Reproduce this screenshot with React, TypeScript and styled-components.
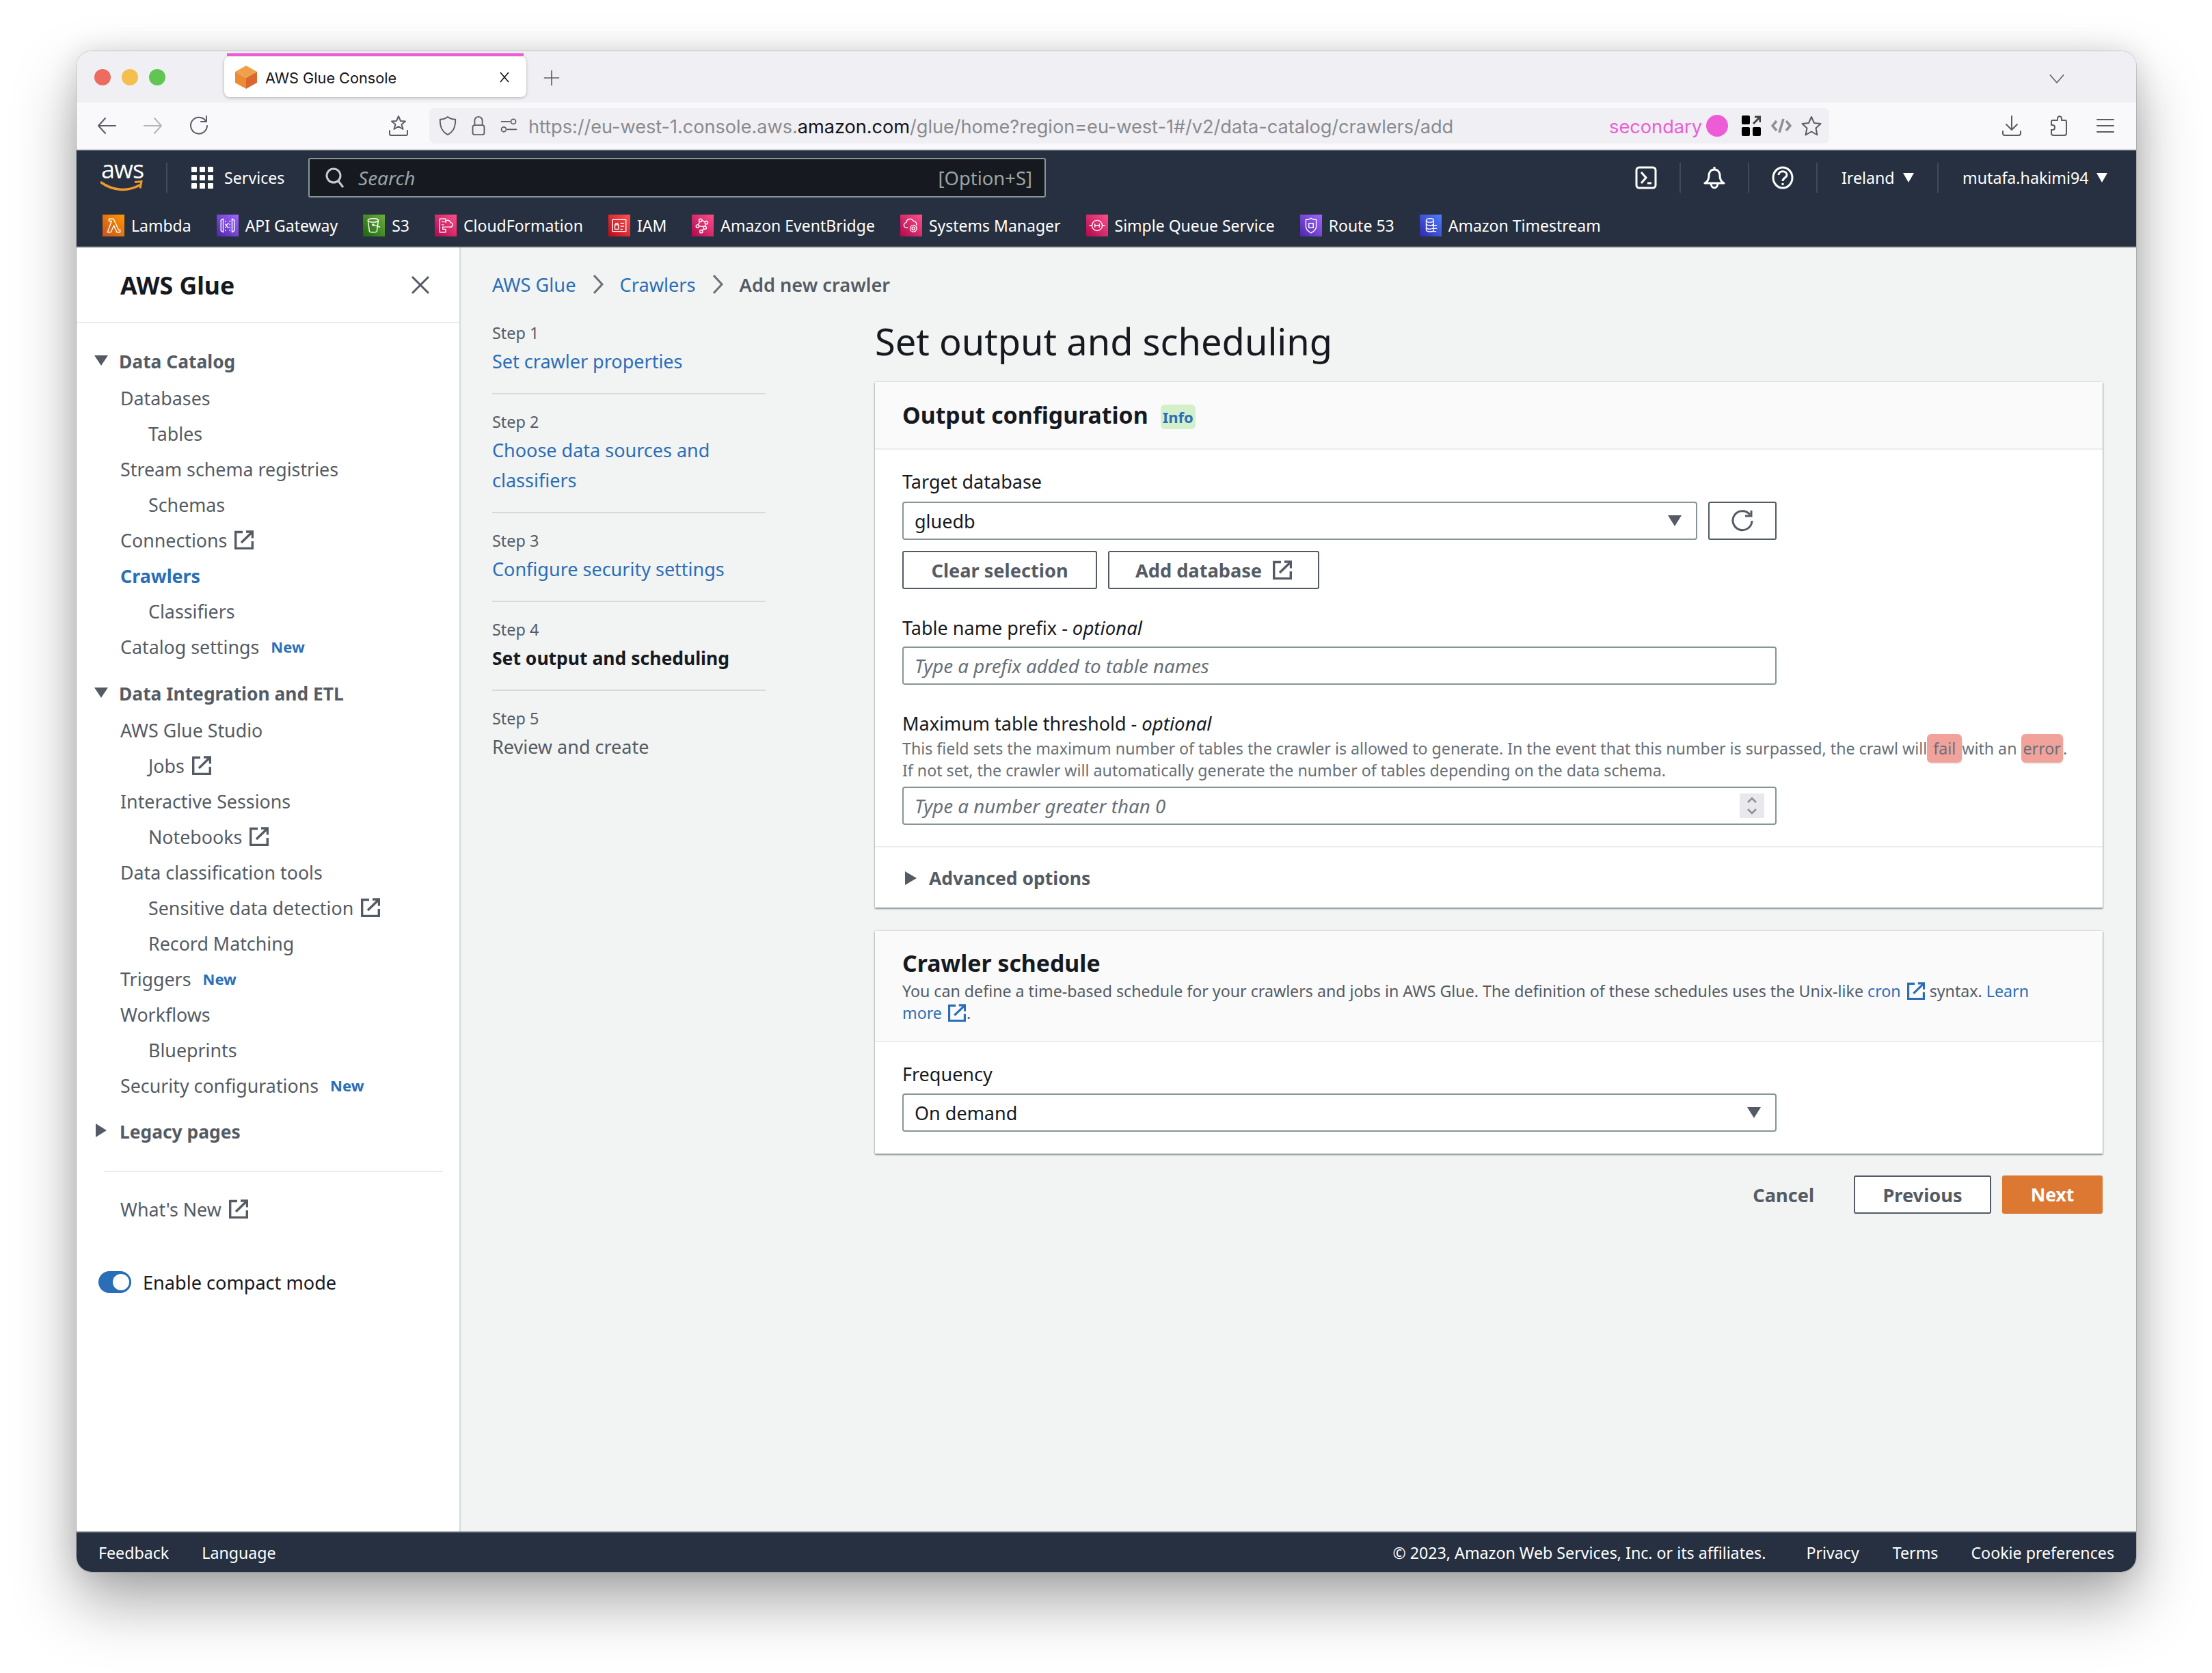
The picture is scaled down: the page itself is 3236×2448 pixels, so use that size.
import React from "react";
import styled, { createGlobalStyle } from "styled-components";

const Global = createGlobalStyle`
  html, body { margin: 0; padding: 0; background: #fff; }
  body { width: 3236px; height: 2448px; overflow: hidden; font-family: "Noto Sans", "Open Sans", sans-serif; color: #16191f; }
  * { box-sizing: border-box; }
  svg { display: block; flex: none; }
`;

const Page = styled.div`
  width: 3236px;
  height: 2448px;
  padding: 75px 0 0 112px;
`;
const Window = styled.div`
  width: 3013px;
  height: 2225px;
  border-radius: 22px;
  overflow: hidden;
  display: flex;
  flex-direction: column;
  background: #fff;
`;
const Shadowed = styled.div`
  width: 3013px;
  height: 2225px;
  border-radius: 22px;
  box-shadow: 0 0 0 1px rgba(0, 0, 0, 0.14), 0 44px 90px rgba(0, 0, 0, 0.34), 0 0 40px rgba(0, 0, 0, 0.12);
`;

/* browser chrome */
const TabStrip = styled.div`
  height: 75px;
  background: #f0f0f4;
  display: flex;
  align-items: flex-start;
  padding-left: 26px;
  flex: none;
`;
const Lights = styled.div`
  display: flex;
  gap: 16px;
  padding-top: 26px;
  width: 190px;
`;
const Light = styled.span<{ $c: string }>`
  width: 24px;
  height: 24px;
  border-radius: 50%;
  background: ${(p) => p.$c};
`;
const Tab = styled.div`
  position: relative;
  margin-top: 8px;
  width: 442px;
  height: 59px;
  background: #fff;
  border-radius: 8px;
  box-shadow: 0 1px 4px rgba(0, 0, 0, 0.28);
  display: flex;
  align-items: center;
  padding: 0 24px 0 16px;
  gap: 12px;
  &::before {
    content: "";
    position: absolute;
    left: 4px;
    right: 4px;
    top: -5px;
    height: 4px;
    background: #ee5bd6;
  }
`;
const TabTitle = styled.span`
  font-family: Inter, sans-serif;
  font-size: 21.7px;
  color: #15141a;
  flex: 1;
  white-space: nowrap;
  padding-top: 3px;
`;
const TabPlus = styled.div`
  margin: 26px 0 0 24px;
`;
const TabChevron = styled.div`
  margin: 28px 104px 0 auto;
`;
const Toolbar = styled.div`
  height: 70px;
  flex: none;
  background: #f9f9fb;
  border-bottom: 2px solid #d6d6d9;
  display: flex;
  align-items: center;
  padding-left: 28px;
`;
const ToolBtn = styled.div<{ $ml?: number }>`
  width: 32px;
  height: 32px;
  margin-left: ${(p) => p.$ml ?? 0}px;
  display: flex;
  align-items: center;
  justify-content: center;
`;
const UrlBar = styled.div`
  margin-left: 29px;
  width: 2048px;
  height: 52px;
  background: #f0f0f4;
  border-radius: 8px;
  display: flex;
  align-items: center;
  padding: 0 10px 0 12px;
  gap: 15px;
`;
const UrlText = styled.div`
  font-family: Inter, sans-serif;
  font-size: 27.2px;
  color: #8a8a8e;
  white-space: nowrap;
  letter-spacing: -0.05px;
  padding-top: 2px;
  b { font-weight: 400; color: #15141a; }
`;
const UrlRight = styled.div`
  margin-left: auto;
  display: flex;
  align-items: center;
`;
const Secondary = styled.span`
  font-family: Inter, sans-serif;
  font-size: 27.2px;
  color: #ee5bd6;
  padding-top: 2px;
`;
const Dot = styled.span`
  width: 32px;
  height: 32px;
  border-radius: 50%;
  background: #ee5bd6;
  margin: 0 20px 0 6px;
`;

/* AWS nav */
const TopNav = styled.div`
  flex: none;
  height: 142px;
  background: #273040;
  border-bottom: 2px solid #545b64;
  color: #fff;
`;
const TopRow = styled.div`
  height: 80px;
  display: flex;
  align-items: center;
`;
const LogoCell = styled.div`
  width: 133px;
  height: 44px;
  padding-left: 36px;
  border-right: 2px solid #414a58;
  position: relative;
  display: flex;
  align-items: flex-start;
`;
const LogoText = styled.span`
  font-family: "Open Sans", sans-serif;
  font-size: 36px;
  line-height: 32px;
  font-weight: 400;
  letter-spacing: -1px;
  margin-top: -6px;
`;
const Smile = styled.div`
  position: absolute;
  left: 35px;
  top: 26px;
`;
const ServicesBtn = styled.div`
  display: flex;
  align-items: center;
  gap: 16px;
  margin-left: 35px;
  font-size: 23.2px;
  width: 171px;
`;
const SearchBox = styled.div`
  width: 1079px;
  height: 58px;
  background: #16191f;
  border: 2px solid #879596;
  border-radius: 3px;
  display: flex;
  align-items: center;
  padding: 0 18px 0 23px;
  gap: 20px;
  color: #9aa5a6;
  font-size: 27.4px;
`;
const SearchHint = styled.span`
  font-style: italic;
  flex: 1;
  font-size: 28px;
`;
const NavRight = styled.div`
  margin-left: auto;
  display: flex;
  align-items: center;
`;
const NavIconCell = styled.div`
  width: 100px;
  height: 44px;
  border-right: 2px solid #414a58;
  display: flex;
  align-items: center;
  justify-content: center;
`;
const NavMenu = styled.div<{ $w: number; $last?: boolean }>`
  width: ${(p) => p.$w}px;
  height: 44px;
  padding-left: 35px;
  border-right: ${(p) => (p.$last ? "none" : "2px solid #414a58")};
  display: flex;
  align-items: center;
  gap: 12px;
  font-size: 23.2px;
  white-space: nowrap;
`;
const Caret = styled.span`
  width: 0;
  height: 0;
  border-left: 8px solid transparent;
  border-right: 8px solid transparent;
  border-top: 14px solid #fff;
`;
const Shortcuts = styled.div`
  height: 60px;
  display: flex;
  align-items: center;
  gap: 37px;
  padding: 0 0 0 38px;
`;
const Shortcut = styled.div`
  display: flex;
  align-items: center;
  gap: 10px;
  font-size: 23px;
  white-space: nowrap;
`;
const SvcIcon = styled.span<{ $a: string; $b: string }>`
  width: 32px;
  height: 32px;
  display: flex;
  align-items: center;
  justify-content: center;
  background: linear-gradient(45deg, ${(p) => p.$a}, ${(p) => p.$b});
`;

/* body */
const Body = styled.div`
  flex: 1;
  display: flex;
  min-height: 0;
`;
const Side = styled.aside`
  width: 562px;
  flex: none;
  background: #fff;
  border-right: 2px solid #d5dbdb;
  display: flex;
  flex-direction: column;
`;
const SideHeader = styled.div`
  height: 111px;
  border-bottom: 2px solid #eaeded;
  display: flex;
  align-items: center;
  justify-content: space-between;
  padding: 0 43px 0 64px;
  font-size: 35.6px;
  font-weight: 700;
  color: #16191f;
`;
const SideList = styled.nav`
  padding-top: 30px;
  display: flex;
  flex-direction: column;
`;
const Section = styled.div<{ $mt?: number }>`
  height: 52px;
  margin-top: ${(p) => p.$mt ?? 0}px;
  margin-bottom: 1px;
  display: flex;
  align-items: center;
  font-size: 26.4px;
  font-weight: 700;
  color: #545b64;
  padding-left: 26px;
  gap: 16px;
`;
const TriDown = styled.span`
  width: 0;
  height: 0;
  border-left: 10px solid transparent;
  border-right: 10px solid transparent;
  border-top: 15px solid #545b64;
  margin-top: -4px;
`;
const TriRight = styled.span`
  width: 0;
  height: 0;
  border-top: 10px solid transparent;
  border-bottom: 10px solid transparent;
  border-left: 16px solid #545b64;
  margin: -4px 3px 0 2px;
`;
const Item = styled.div<{ $lvl?: number; $active?: boolean }>`
  height: 52px;
  display: flex;
  align-items: center;
  gap: 11px;
  font-size: 26.8px;
  font-weight: ${(p) => (p.$active ? 700 : 400)};
  color: ${(p) => (p.$active ? "#2a6eb8" : "#545b64")};
  padding-left: ${(p) => (p.$lvl === 2 ? 105 : 64)}px;
  white-space: nowrap;
`;
const NewTag = styled.span`
  font-size: 22px;
  font-weight: 700;
  color: #2a6eb8;
  margin-left: 6px;
`;
const SideDivider = styled.div`
  margin: 30px 24px 28px 40px;
  height: 2px;
  background: #eaeded;
`;
const ToggleRow = styled.div`
  margin-top: 55px;
  height: 52px;
  display: flex;
  align-items: center;
  gap: 17px;
  padding-left: 32px;
  font-size: 27.1px;
  color: #16191f;
`;
const Toggle = styled.span`
  width: 48px;
  height: 32px;
  border-radius: 16px;
  background: #2a6eb8;
  display: flex;
  align-items: center;
  justify-content: flex-end;
  padding-right: 3px;
  &::after {
    content: "";
    width: 24px;
    height: 24px;
    border-radius: 50%;
    background: #fff;
  }
`;

const Main = styled.main`
  flex: 1;
  min-width: 0;
  background: #f2f3f3;
  padding: 35px 49px 0 46px;
`;
const Crumbs = styled.div`
  height: 38px;
  display: flex;
  align-items: center;
  font-size: 27.2px;
  white-space: nowrap;
`;
const CrumbLink = styled.span`
  color: #2a6eb8;
`;
const CrumbSep = styled.span`
  width: 64px;
  display: flex;
  justify-content: center;
`;
const CrumbNow = styled.span`
  color: #545b64;
  font-weight: 600;
`;
const Columns = styled.div`
  display: grid;
  grid-template-columns: 400px 1796px;
  column-gap: 160px;
  margin-top: 30px;
`;
const Steps = styled.ol`
  list-style: none;
  margin: 2px 0 0;
  padding: 0;
`;
const Step = styled.li<{ $last?: boolean }>`
  padding-bottom: 24px;
  margin-bottom: 20px;
  border-bottom: ${(p) => (p.$last ? "none" : "2px solid #d5dbdb")};
`;
const StepNum = styled.div`
  height: 40px;
  line-height: 40px;
  font-size: 23.4px;
  color: #545b64;
`;
const StepName = styled.div<{ $kind: "link" | "now" | "next" }>`
  font-size: ${(p) => (p.$kind === "now" ? 26.5 : 27)}px;
  line-height: 44px;
  color: ${(p) => (p.$kind === "link" ? "#2a6eb8" : p.$kind === "now" ? "#16191f" : "#545b64")};
  font-weight: ${(p) => (p.$kind === "now" ? 700 : 400)};
`;
const Title = styled.h1`
  margin: 0 0 26px;
  font-size: 54.2px;
  line-height: 68px;
  font-weight: 400;
  color: #16191f;
`;
const Card = styled.section`
  background: #fff;
  box-shadow: 0 2px 2px rgba(0, 28, 36, 0.4), 1px 1px 2px rgba(0, 28, 36, 0.18), -1px 0 2px rgba(0, 28, 36, 0.1), 0 -1px 2px rgba(0, 28, 36, 0.05);
  & + & { margin-top: 34px; }
`;
const CardHead = styled.header<{ $h: number }>`
  height: ${(p) => p.$h}px;
  background: #fafafa;
  border-bottom: 2px solid #eaeded;
  padding: 0 40px;
`;
const HeadRow = styled.div`
  display: flex;
  align-items: center;
  gap: 18px;
  height: 97px;
  padding-bottom: 2px;
`;
const H2 = styled.h2`
  margin: 0;
  font-size: 33.8px;
  line-height: 40px;
  font-weight: 700;
  color: #16191f;
`;
const InfoBadge = styled.span`
  height: 36px;
  width: 51px;
  margin-top: 6px;
  display: flex;
  align-items: center;
  justify-content: center;
  background: #d3f0cb;
  border-radius: 6px;
  font-size: 22px;
  font-weight: 700;
  color: #2a6eb8;
`;
const CardBody = styled.div<{ $pb?: number; $pt?: number }>`
  padding: ${(p) => p.$pt ?? 29}px 40px ${(p) => p.$pb ?? 31}px;
`;
const Label = styled.div`
  font-size: 27px;
  height: 36px;
  line-height: 36px;
  color: #16191f;
  i { font-style: italic; font-size: 27.6px; }
`;
const Field = styled.div`
  margin-top: 38px;
`;
const SelectRow = styled.div`
  display: flex;
  gap: 16px;
  margin-top: 11px;
`;
const Box = styled.div<{ $w?: number; $mt?: number }>`
  width: ${(p) => (p.$w ? p.$w + "px" : "1279px")};
  height: 56px;
  border: 2px solid #879596;
  border-radius: 4px;
  background: #fff;
  display: flex;
  align-items: center;
  padding: 0 16px;
  font-size: 27px;
  color: #16191f;
  margin-top: ${(p) => p.$mt ?? 10}px;
`;
const SelectBox = styled(Box)`
  justify-content: space-between;
  padding-right: 21px;
`;
const SelTri = styled.span`
  width: 0;
  height: 0;
  border-left: 10px solid transparent;
  border-right: 10px solid transparent;
  border-top: 16px solid #545b64;
`;
const Placeholder = styled.span`
  font-style: italic;
  font-size: 27.7px;
  color: #687078;
  flex: 1;
`;
const Spinner = styled.span`
  width: 36px;
  height: 36px;
  background: #e8e8ed;
  display: flex;
  align-items: center;
  justify-content: center;
`;
const Btn = styled.div<{ $w: number }>`
  width: ${(p) => p.$w}px;
  height: 56px;
  border: 2px solid #545b64;
  border-radius: 3px;
  background: #fff;
  display: flex;
  align-items: center;
  justify-content: center;
  gap: 16px;
  font-size: 27.2px;
  font-weight: 700;
  color: #545b64;
`;
const BtnRow = styled.div`
  display: flex;
  gap: 16px;
  margin-top: 16px;
`;
const Desc = styled.div`
  margin-top: 3px;
  height: 64px;
  font-size: 23.2px;
  line-height: 32px;
  color: #687078;
  white-space: nowrap;
`;
const Mark = styled.span<{ $pad: number }>`
  background: #f0a29b;
  border-radius: 6px;
  padding: 5px ${(p) => p.$pad}px;
  box-shadow: 1px 2px 1px rgba(0, 0, 0, 0.08);
`;
const Expander = styled.div`
  height: 90px;
  border-top: 2px solid #eaeded;
  padding: 2px 0 0 44px;
  display: flex;
  align-items: center;
  gap: 18px;
  font-size: 26.5px;
  font-weight: 700;
  color: #545b64;
`;
const ExpTri = styled.span`
  width: 0;
  height: 0;
  border-top: 10px solid transparent;
  border-bottom: 10px solid transparent;
  border-left: 17px solid #545b64;
`;
const Crawl = styled.div`
  padding-top: 27px;
`;
const HeadDesc = styled.div`
  margin-top: 5px;
  font-size: 23.2px;
  line-height: 32px;
  color: #545b64;
`;
const A = styled.span`
  color: #2a6eb8;
`;
const InlineIcon = styled.span`
  display: inline-block;
  vertical-align: -4px;
  margin: 0 1px 0 9px;
`;
const Actions = styled.div`
  margin-top: 32px;
  display: flex;
  align-items: center;
  justify-content: flex-end;
`;
const Cancel = styled.span`
  font-size: 27.2px;
  font-weight: 700;
  color: #545b64;
  margin-right: 58px;
`;
const NextBtn = styled.div`
  width: 147px;
  height: 56px;
  margin-left: 16px;
  border-radius: 3px;
  background: #dd7833;
  color: #fff;
  font-size: 26.5px;
  font-weight: 700;
  display: flex;
  align-items: center;
  justify-content: center;
`;
const Footer = styled.footer`
  flex: none;
  height: 59px;
  background: #273040;
  border-top: 2px solid #545b64;
  display: flex;
  align-items: center;
  padding: 0 32px;
  color: #fff;
  font-size: 23.2px;
  white-space: nowrap;
`;
const FootLink = styled.span<{ $ml?: number }>`
  margin-left: ${(p) => p.$ml ?? 48}px;
`;
const FootRight = styled.div`
  margin-left: auto;
  display: flex;
`;

const Ext = ({ c = "#545b64", s = 28 }: { c?: string; s?: number }) => (
  <svg width={s} height={s} viewBox="0 0 28 28" fill="none" stroke={c} strokeWidth="3.400">
    <path d="M12 2.500H1.700v24h24.600V16" />
    <path d="M10 18 26 2.500M17 2h9.500v9.500" />
  </svg>
);

const I = ({ s = 32, w = 2, c = "#5b5b66", children }: { s?: number; w?: number; c?: string; children: React.ReactNode }) => (
  <svg width={s} height={s} viewBox="0 0 32 32" fill="none" stroke={c} strokeWidth={w} strokeLinecap="round" strokeLinejoin="round">
    {children}
  </svg>
);

const Cube = () => (
  <svg width="32" height="34" viewBox="0 0 32 34">
    <path d="M16 0 32 9 16 18 0 9z" fill="#f0a04b" />
    <path d="M0 9 16 18v16L0 25z" fill="#ec8b34" />
    <path d="M32 9 16 18v16l16-9z" fill="#d9672e" />
  </svg>
);

const Stroke = ({ children }: { children: React.ReactNode }) => (
  <svg width="26" height="26" viewBox="0 0 24 24" fill="none" stroke="#fff" strokeWidth="1.300" strokeLinejoin="round" strokeLinecap="round">
    {children}
  </svg>
);

const services: { n: string; a: string; b: string; g: React.ReactNode }[] = [
  { n: "Lambda", a: "#c8511b", b: "#ff9900", g: <path d="M4 21h4.500L12.500 12l4 9H21v-3h-2L12 3H6v3h3.500L4 21z" /> },
  { n: "API Gateway", a: "#4d27a8", b: "#a166ff", g: <><path d="M6 3 3 5v14l3 2zM18 3l3 2v14l-3 2z" /><path d="M9 6v1M9 10v1M9 14v1M9 18v1M15 6v1M15 10v1M15 14v1M15 18v1M13 9l-3 3 3 3" /></> },
  { n: "S3", a: "#1b660f", b: "#6cae3e", g: <><ellipse cx="11" cy="5" rx="7" ry="2.500" /><path d="M4 5l2 15c.2 1.500 9.800 1.500 10 0l2-15" /><path d="M11 11l9 3" /><circle cx="11" cy="11" r="1" /></> },
  { n: "CloudFormation", a: "#b0084d", b: "#ff4f8b", g: <><path d="M12 8V3H4v18h8v-4H8v-3h4" /><path d="M13 14h5a3 3 0 0 0 .5-6 4 4 0 0 0-7.500-1" /><path d="M7 7h2M7 11h2" /></> },
  { n: "IAM", a: "#bd0816", b: "#ff5252", g: <><rect x="3" y="4" width="18" height="16" /><rect x="6" y="11" width="5" height="6" /><path d="M7 11V9h3v2M14 9h4M14 13h4M14 17h2" /></> },
  { n: "Amazon EventBridge", a: "#b0084d", b: "#ff4f8b", g: <><circle cx="9" cy="5" r="2" /><circle cx="17" cy="8" r="2" /><circle cx="5" cy="13" r="2" /><circle cx="15" cy="15" r="2" /><circle cx="10" cy="20" r="2" /><path d="M11 5l4 2M8 7l-2 4M7 13h6M16 10l-1 3M13 17l-2 2" /></> },
  { n: "Systems Manager", a: "#b0084d", b: "#ff4f8b", g: <><path d="M7 15H6a3.500 3.500 0 0 1-.5-7 5 5 0 0 1 9.500-2 4 4 0 0 1 4 5" /><circle cx="15" cy="16" r="2" /><circle cx="15" cy="16" r="4.500" strokeDasharray="2 1.500" /></> },
  { n: "Simple Queue Service", a: "#b0084d", b: "#ff4f8b", g: <><circle cx="12" cy="12" r="7" /><path d="M2 12h3M19 12h3M9 10v4M15 10v4M9 12h6" /></> },
  { n: "Route 53", a: "#4d27a8", b: "#a166ff", g: <><path d="M12 2c2 2 4 2 7 2v9c0 4-3 7-7 9-4-2-7-5-7-9V4c3 0 5 0 7-2z" /><path d="M9 9h6v6H9z" /></> },
  { n: "Amazon Timestream", a: "#2e27ad", b: "#527fff", g: <><ellipse cx="11" cy="5" rx="5" ry="2.500" /><path d="M6 5v13c0 3 10 3 10 0V5M6 9.500c0 3 10 3 10 0M6 14c0 3 5 3 7 2.500M14 12h6M14 16h6M12 20h7" /></> },
];

const sideA: { t: string; lvl?: number; ext?: boolean; neu?: boolean; active?: boolean }[] = [
  { t: "Databases" }, { t: "Tables", lvl: 2 }, { t: "Stream schema registries" }, { t: "Schemas", lvl: 2 },
  { t: "Connections", ext: true }, { t: "Crawlers", active: true }, { t: "Classifiers", lvl: 2 }, { t: "Catalog settings", neu: true },
];
const sideB: typeof sideA = [
  { t: "AWS Glue Studio" }, { t: "Jobs", lvl: 2, ext: true }, { t: "Interactive Sessions" }, { t: "Notebooks", lvl: 2, ext: true },
  { t: "Data classification tools" }, { t: "Sensitive data detection", lvl: 2, ext: true }, { t: "Record Matching", lvl: 2 },
  { t: "Triggers", neu: true }, { t: "Workflows" }, { t: "Blueprints", lvl: 2 }, { t: "Security configurations", neu: true },
];
const renderItem = (i: (typeof sideA)[number]) => (
  <Item key={i.t} $lvl={i.lvl} $active={i.active}>
    {i.t}
    {i.ext && <Ext />}
    {i.neu && <NewTag>New</NewTag>}
  </Item>
);

const steps: { k: "link" | "now" | "next"; t: React.ReactNode }[] = [
  { k: "link", t: "Set crawler properties" },
  { k: "link", t: <>Choose data sources and<br />classifiers</> },
  { k: "link", t: "Configure security settings" },
  { k: "now", t: "Set output and scheduling" },
  { k: "next", t: "Review and create" },
];

const Chevron = () => (
  <svg width="16" height="30" viewBox="0 0 16 30" fill="none" stroke="#687078" strokeWidth="3"><path d="M2 2l12 13L2 28" /></svg>
);

export default function App() {
  return (
    <Page>
      <Global />
      <Shadowed>
        <Window>
          <TabStrip>
            <Lights>
              <Light $c="#ec6a5e" />
              <Light $c="#f4bf4f" />
              <Light $c="#61c554" />
            </Lights>
            <Tab>
              <Cube />
              <TabTitle>AWS Glue Console</TabTitle>
              <svg width="16" height="16" viewBox="0 0 16 16" stroke="#15141a" strokeWidth="1.600"><path d="M2 1l12 14M14 1 2 15" /></svg>
            </Tab>
            <TabPlus>
              <I s={26} w={2}><path d="M16 3v26M3 16h26" /></I>
            </TabPlus>
            <TabChevron>
              <I s={24} w={2}><path d="M3 9l13 15L29 9" /></I>
            </TabChevron>
          </TabStrip>
          <Toolbar>
            <ToolBtn><I><path d="M29 16H4M14 5 4 16l10 11" /></I></ToolBtn>
            <ToolBtn $ml={36}><I c="#b4b4ba"><path d="M3 16h25M18 5l10 11-10 11" /></I></ToolBtn>
            <ToolBtn $ml={36}><I><path d="M25 9a12 12 0 1 0 2 7" /><path d="M26 2v8h-8" /></I></ToolBtn>
            <ToolBtn $ml={259}><I><path d="M16 2l3 7 7 .5-5.500 4.500 2 7-6.500-4-6.500 4 2-7L6 9.500l7-.5z" /><path d="M3 23v5c0 1 1 2 2 2h22c1 0 2-1 2-2v-5" /></I></ToolBtn>
            <UrlBar>
              <I s={30}><path d="M16 2c4 3 8 4 12 4 0 12-3 19-12 24C7 25 4 18 4 6c4 0 8-1 12-4z" /></I>
              <I s={30}><rect x="7" y="15" width="18" height="15" rx="3" /><path d="M10 15V8a6 6 0 0 1 12 0v7" /></I>
              <I s={28}><circle cx="24" cy="9" r="4" /><path d="M4 9h14M14 22h15" /><circle cx="8" cy="22" r="4" /></I>
              <UrlText>https://eu-west-1.console.aws.<b>amazon.com</b>/glue/home?region=eu-west-1#/v2/data-catalog/crawlers/add</UrlText>
              <UrlRight>
                <Secondary>secondary</Secondary>
                <Dot />
                <svg width="28" height="30" viewBox="0 0 28 30" style={{ marginRight: 15 }}>
                  <rect x="0" y="0" width="12" height="13" rx="2" />
                  <rect x="0" y="17" width="12" height="13" rx="2" />
                  <rect x="16" y="17" width="12" height="13" rx="2" />
                  <path d="M17 12 26 3M19 2h8v8" stroke="#444" strokeWidth="3" fill="none" />
                </svg>
                <svg width="30" height="24" viewBox="0 0 30 24" fill="none" stroke="#8f8f8f" strokeWidth="3.500" style={{ marginRight: 13 }}>
                  <path d="M8 5 2 12l6 7M22 5l6 7-6 7M18 2l-6 20" />
                </svg>
                <I><path d="M16 3l4 9 9.500 1-7 6.500 2 10L16 24.500 7.500 29.500l2-10-7-6.500 9.500-1z" /></I>
              </UrlRight>
            </UrlBar>
            <ToolBtn $ml={251}><I><path d="M16 2v20M8 14l8 8 8-8" /><path d="M3 24v3c0 1.500 1 3 3 3h20c2 0 3-1.500 3-3v-3" /></I></ToolBtn>
            <ToolBtn $ml={38}><I><path d="M13 30H7c-2 0-3-1-3-3v-5h2c4 0 4-7 0-7H4v-5c0-1 1-2 2-2h7V6c0-5 6-5 6 0v2h5c1 0 2 1 2 2v17c0 2-1 3-3 3z" /></I></ToolBtn>
            <ToolBtn $ml={35}><I><path d="M4 7h24M4 16h24M4 25h24" /></I></ToolBtn>
          </Toolbar>
          <TopNav>
            <TopRow>
              <LogoCell>
                <LogoText>aws</LogoText>
                <Smile>
                  <svg width="62" height="18" viewBox="0 0 62 18" fill="none">
                    <path d="M1 3c17 12 38 14 56 4" stroke="#f09a2c" strokeWidth="3.500" strokeLinecap="round" />
                    <path d="M50 2.500l10-1-2 10" stroke="#f09a2c" strokeWidth="3" />
                  </svg>
                </Smile>
              </LogoCell>
              <ServicesBtn>
                <svg width="32" height="32" viewBox="0 0 32 32" fill="#fff">
                  {[0, 12, 24].flatMap((y) => [0, 12, 24].map((x) => <rect key={`${x}-${y}`} x={x} y={y} width="8" height="8" rx="1" />))}
                </svg>
                Services
              </ServicesBtn>
              <SearchBox>
                <svg width="28" height="30" viewBox="0 0 28 30" fill="none" stroke="#c6cccc" strokeWidth="3"><circle cx="12" cy="12" r="10" /><path d="M19 20l7 9" /></svg>
                <SearchHint>Search</SearchHint>
                <span>[Option+S]</span>
              </SearchBox>
              <NavRight>
                <NavIconCell>
                  <svg width="32" height="34" viewBox="0 0 32 34" fill="none" stroke="#fff" strokeWidth="3"><rect x="2" y="2" width="28" height="30" rx="4" /><path d="M9 9l7 8-7 8M18 25h6" /></svg>
                </NavIconCell>
                <NavIconCell>
                  <svg width="32" height="34" viewBox="0 0 32 34" fill="none" stroke="#fff" strokeWidth="3" strokeLinejoin="round"><path d="M16 1v4M16 5c-5 0-8 4-8 9 0 6-2 9-6 11h28c-4-2-6-5-6-11 0-5-3-9-8-9zM11 25c0 9 10 9 10 0" /></svg>
                </NavIconCell>
                <NavIconCell>
                  <svg width="32" height="34" viewBox="0 0 32 34" fill="none" stroke="#fff" strokeWidth="3"><ellipse cx="16" cy="17" rx="14" ry="15" /><path d="M10 13c0-7 12-7 12 0 0 4-6 4-6 9" /><path d="M16 25v3" /></svg>
                </NavIconCell>
                <NavMenu $w={177}>Ireland<Caret /></NavMenu>
                <NavMenu $w={289} $last>mutafa.hakimi94<Caret /></NavMenu>
              </NavRight>
            </TopRow>
            <Shortcuts>
              {services.map((s) => (
                <Shortcut key={s.n}>
                  <SvcIcon $a={s.a} $b={s.b}><Stroke>{s.g}</Stroke></SvcIcon>
                  {s.n}
                </Shortcut>
              ))}
            </Shortcuts>
          </TopNav>
          <Body>
            <Side>
              <SideHeader>
                AWS Glue
                <svg width="28" height="28" viewBox="0 0 28 28" stroke="#545b64" strokeWidth="3"><path d="M2 2l24 24M26 2 2 26" /></svg>
              </SideHeader>
              <SideList>
                <Section><TriDown />Data Catalog</Section>
                {sideA.map(renderItem)}
                <Section $mt={17}><TriDown />Data Integration and ETL</Section>
                {sideB.map(renderItem)}
                <Section $mt={16}><TriRight />Legacy pages</Section>
                <SideDivider />
                <Item>What's New<Ext /></Item>
                <ToggleRow><Toggle />Enable compact mode</ToggleRow>
              </SideList>
            </Side>
            <Main>
              <Crumbs>
                <CrumbLink>AWS Glue</CrumbLink>
                <CrumbSep><Chevron /></CrumbSep>
                <CrumbLink>Crawlers</CrumbLink>
                <CrumbSep><Chevron /></CrumbSep>
                <CrumbNow>Add new crawler</CrumbNow>
              </Crumbs>
              <Columns>
                <Steps>
                  {steps.map((s, i) => (
                    <Step key={i} $last={i === 4}>
                      <StepNum>Step {i + 1}</StepNum>
                      <StepName $kind={s.k}>{s.t}</StepName>
                    </Step>
                  ))}
                </Steps>
                <div>
                  <Title>Set output and scheduling</Title>
                  <Card>
                    <CardHead $h={99}>
                      <HeadRow>
                        <H2>Output configuration</H2>
                        <InfoBadge>Info</InfoBadge>
                      </HeadRow>
                    </CardHead>
                    <CardBody>
                      <Label>Target database</Label>
                      <SelectRow>
                        <SelectBox $w={1163} $mt={0}>gluedb<SelTri /></SelectBox>
                        <Btn $w={100}>
                          <svg width="34" height="34" viewBox="0 0 34 34" fill="none" stroke="#545b64" strokeWidth="3"><path d="M28 8a14 14 0 1 0 3 9" /><path d="M30 2v8h-9" /></svg>
                        </Btn>
                      </SelectRow>
                      <BtnRow>
                        <Btn $w={285}>Clear selection</Btn>
                        <Btn $w={309}>Add database<Ext /></Btn>
                      </BtnRow>
                      <Field>
                        <Label>Table name prefix - <i>optional</i></Label>
                        <Box><Placeholder>Type a prefix added to table names</Placeholder></Box>
                      </Field>
                      <Field>
                        <Label>Maximum table threshold - <i>optional</i></Label>
                        <Desc>
                          This field sets the maximum number of tables the crawler is allowed to generate. In the event that this number is surpassed, the crawl will<Mark $pad={9}>fail</Mark>with an <Mark $pad={3}>error</Mark>.<br />
                          If not set, the crawler will automatically generate the number of tables depending on the data schema.
                        </Desc>
                        <Box $mt={8}>
                          <Placeholder>Type a number greater than 0</Placeholder>
                          <Spinner>
                            <svg width="16" height="28" viewBox="0 0 16 28" fill="none" stroke="#8f8f99" strokeWidth="2.500"><path d="M2 9l6-6 6 6M2 19l6 6 6-6" /></svg>
                          </Spinner>
                        </Box>
                      </Field>
                    </CardBody>
                    <Expander><ExpTri />Advanced options</Expander>
                  </Card>
                  <Card>
                    <CardHead $h={163}>
                      <Crawl>
                        <H2>Crawler schedule</H2>
                        <HeadDesc>
                          You can define a time-based schedule for your crawlers and jobs in AWS Glue. The definition of these schedules uses the Unix-like <A>cron</A>
                          <InlineIcon><Ext c="#2a6eb8" s={26} /></InlineIcon> syntax. <A>Learn<br />more</A>
                          <InlineIcon><Ext c="#2a6eb8" s={26} /></InlineIcon>.
                        </HeadDesc>
                      </Crawl>
                    </CardHead>
                    <CardBody $pt={29} $pb={32}>
                      <Label>Frequency</Label>
                      <SelectBox>On demand<SelTri /></SelectBox>
                    </CardBody>
                  </Card>
                  <Actions>
                    <Cancel>Cancel</Cancel>
                    <Btn $w={201}>Previous</Btn>
                    <NextBtn>Next</NextBtn>
                  </Actions>
                </div>
              </Columns>
            </Main>
          </Body>
          <Footer>
            <FootLink $ml={0}>Feedback</FootLink>
            <FootLink>Language</FootLink>
            <FootRight>
              <span>© 2023, Amazon Web Services, Inc. or its affiliates.</span>
              <FootLink $ml={59}>Privacy</FootLink>
              <FootLink $ml={49}>Terms</FootLink>
              <FootLink>Cookie preferences</FootLink>
            </FootRight>
          </Footer>
        </Window>
      </Shadowed>
    </Page>
  );
}
